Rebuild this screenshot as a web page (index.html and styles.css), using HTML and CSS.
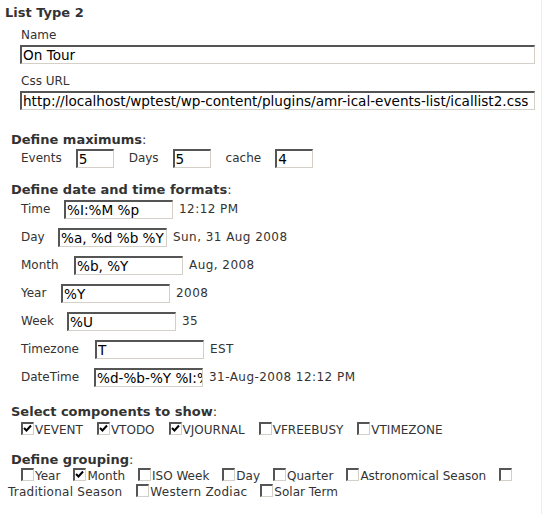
FILE: index.html
```html
<!DOCTYPE html>
<html>
<head>
<meta charset="utf-8">
<link rel="stylesheet" href="styles.css">
</head>
<body>
<div class="page">
  <div class="title">List Type 2</div>
  <div class="block">
    <div class="lbl">Name</div>
    <input class="wide" type="text" value="On Tour">
    <div class="lbl lbl2">Css URL</div>
    <input class="wide" type="text" value="http://localhost/wptest/wp-content/plugins/amr-ical-events-list/icallist2.css">
  </div>

  <div class="head head-max"><b>Define maximums</b>:</div>
  <div class="maxrow">
    <span>Events</span><input class="small" type="text" value="5">
    <span>Days</span><input class="small" type="text" value="5">
    <span>cache</span><input class="small" type="text" value="4">
  </div>

  <div class="head head-fmt"><b>Define date and time formats</b>:</div>
  <div class="fmts">
    <div class="frow"><span class="fl w-time">Time</span><input class="fmt" type="text" value="%I:%M %p"><span class="out">12:12 PM</span></div>
    <div class="frow"><span class="fl w-day">Day</span><input class="fmt" type="text" value="%a, %d %b %Y"><span class="out">Sun, 31 Aug 2008</span></div>
    <div class="frow"><span class="fl w-month">Month</span><input class="fmt" type="text" value="%b, %Y"><span class="out">Aug, 2008</span></div>
    <div class="frow"><span class="fl w-year">Year</span><input class="fmt" type="text" value="%Y"><span class="out">2008</span></div>
    <div class="frow"><span class="fl w-week">Week</span><input class="fmt" type="text" value="%U"><span class="out">35</span></div>
    <div class="frow"><span class="fl w-tz">Timezone</span><input class="fmt" type="text" value="T"><span class="out">EST</span></div>
    <div class="frow"><span class="fl w-dt">DateTime</span><input class="fmt" type="text" value="%d-%b-%Y %I:%M %p"><span class="out">31-Aug-2008 12:12 PM</span></div>
  </div>

  <div class="head head-sel"><b>Select components to show</b>:</div>
  <div class="checks comps"><span class="ck"><span class="box on"><svg width="9" height="9" viewBox="0 0 9 9"><path d="M1 4 L3.5 6.5 L8 1.5" fill="none" stroke="#000" stroke-width="2"/></svg></span>VEVENT</span><span class="ck"><span class="box on"><svg width="9" height="9" viewBox="0 0 9 9"><path d="M1 4 L3.5 6.5 L8 1.5" fill="none" stroke="#000" stroke-width="2"/></svg></span>VTODO</span><span class="ck"><span class="box on"><svg width="9" height="9" viewBox="0 0 9 9"><path d="M1 4 L3.5 6.5 L8 1.5" fill="none" stroke="#000" stroke-width="2"/></svg></span>VJOURNAL</span><span class="ck"><span class="box"></span>VFREEBUSY</span><span class="ck"><span class="box"></span>VTIMEZONE</span></div>

  <div class="head head-grp"><b>Define grouping</b>:</div>
  <div class="checks grp"><span class="ck"><span class="box"></span>Year</span><span class="ck"><span class="box on"><svg width="9" height="9" viewBox="0 0 9 9"><path d="M1 4 L3.5 6.5 L8 1.5" fill="none" stroke="#000" stroke-width="2"/></svg></span>Month</span><span class="ck"><span class="box"></span>ISO Week</span><span class="ck"><span class="box"></span>Day</span><span class="ck"><span class="box"></span>Quarter</span><span class="ck astro"><span class="box"></span>Astronomical Season</span><span class="ck brk"><span class="box"></span><wbr><span class="wide-lbl">Traditional Season</span></span><span class="ck wz"><span class="box"></span><span class="wide-lbl">Western Zodiac</span></span><span class="ck"><span class="box"></span>Solar Term</span></div>
</div>
</body>
</html>
```

FILE: styles.css
```css
html, body {
  margin: 0;
  padding: 0;
  background: #fff;
}
body {
  font-family: "DejaVu Sans", Verdana, sans-serif;
  font-size: 12px;
  line-height: 15px;
  color: #333;
}
.page {
  width: 542px;
  min-height: 514px;
  border-right: 1px solid #ececec;
  box-sizing: border-box;
  padding-top: 5px;
}
.title {
  font-weight: bold;
  font-size: 13px;
  margin-left: 5px;
  height: 15px;
}
.block {
  margin-left: 20px;
  padding-top: 8px;
}
.lbl {
  margin-left: 1px;
  height: 15px;
  margin-bottom: 2px;
}
.lbl2 {
  margin-top: 10px;
}
input[type=text] {
  font-family: "DejaVu Sans", Verdana, sans-serif;
  font-size: 13.6px;
  color: #000;
  background: #fff;
  box-sizing: border-box;
  height: 19px;
  margin: 0;
  padding: 0 0 0 1px;
  border-style: solid;
  border-width: 2px 1px 1px 2px;
  border-color: #555 #d4d0c8 #d4d0c8 #555;
  outline: none;
  display: block;
}
.wide {
  width: 515px;
}
.head {
  margin-left: 11px;
  height: 15px;
  font-size: 13px;
}
.head b {
  font-weight: bold;
}
.head-max { margin-top: 22px; }
.maxrow {
  display: flex;
  align-items: center;
  margin-top: 2px;
  margin-left: 21px;
  height: 19px;
}
.maxrow span {
  margin-right: 14px;
}
.maxrow input.small {
  width: 38px;
  margin-right: 15px;
}
.head-fmt { margin-top: 14px; }
.fmts {
  margin-left: 21px;
  padding-top: 3px;
  display: flex;
  flex-direction: column;
  gap: 9px;
}
.frow {
  display: flex;
  align-items: center;
  height: 19px;
}
.frow input.fmt {
  width: 109px;
  margin-right: 6px;
  overflow: hidden;
}
.out {
  letter-spacing: 0.45px;
}
.w-time { width: 43px; }
.w-day { width: 37px; }
.w-month { width: 53px; }
.w-year { width: 40px; }
.w-week { width: 46px; }
.w-tz { width: 74px; }
.w-dt { width: 73px; }
.head-sel { margin-top: 17px; }
.head-grp { margin-top: 14px; }
.checks {
  margin-left: 8px;
  text-indent: 13px;
  margin-right: 6px;
}
.comps { margin-top: 3px; }
.grp { margin-top: 1px; }
.ck {
  white-space: nowrap;
  margin-right: 14px;
  text-indent: 0;
}
.grp .ck { margin-right: 13px; }
.ck.brk { white-space: normal; margin-right: 14px; }
.wide-lbl { letter-spacing: 0.25px; }
.box {
  display: inline-block;
  width: 13px;
  height: 13px;
  box-sizing: border-box;
  border-style: solid;
  border-width: 2px 1px 1px 2px;
  border-color: #555 #d4d0c8 #d4d0c8 #555;
  background: #fff;
  vertical-align: -1px;
  margin-right: 1px;
  position: relative;
  text-indent: 0;
}
.box svg {
  position: absolute;
  left: 0;
  top: 0;
}
```
